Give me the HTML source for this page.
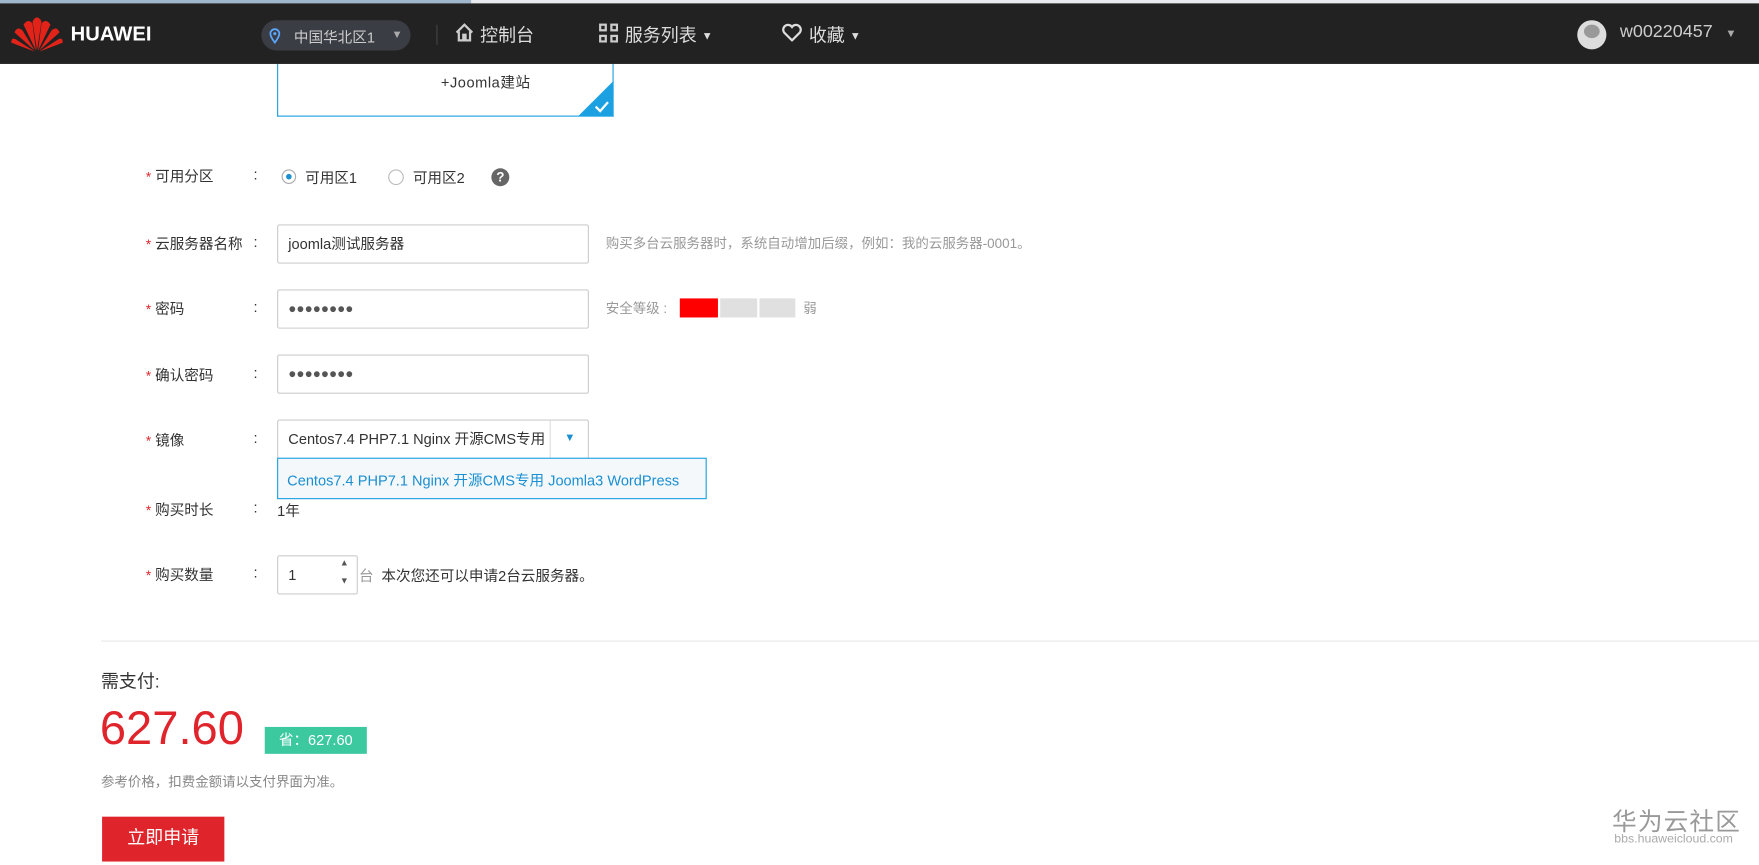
<!DOCTYPE html>
<html><head><meta charset="utf-8">
<style>
html,body{margin:0;padding:0;background:#fff;overflow:hidden}
body{width:1759px;height:865px;position:relative}
#s{position:absolute;left:0;top:0;width:1568px;height:771px;transform:scale(1.1218);transform-origin:0 0;font-family:"Liberation Sans","Noto Sans CJK SC",sans-serif;color:#333}
.a{position:absolute;white-space:nowrap}
.hd{position:absolute;left:0;top:3px;width:1568px;height:54px;background:#222}
.lab{font-size:13px;color:#333}
.star{color:#e0242b;font-size:12px}
.inp{position:absolute;left:247px;border:1px solid #ccc;border-radius:2px;background:#fff;font-size:13px;line-height:33px;padding-left:9px;box-sizing:border-box;width:278px;height:35px}
.dots{font-size:12px;letter-spacing:0px;color:#555}
.hint{font-size:12px;color:#999}
</style></head><body><div id="s">
<div class="a" style="left:0;top:0;width:1568px;height:3px;background:#e8ecf0"></div>
<div class="a" style="left:0;top:0;width:420px;height:3px;background:#9fb6cc"></div>
<div class="hd"></div>
<svg class="a" style="left:10px;top:13px" width="46" height="34" viewBox="0 0 46 34">
<g fill="#e2231a">
<path d="M23 32 L19 6 Q23 -1 27 6 Z"/>
<path d="M22 32 L11 9 Q15 3 19 8 Z" />
<path d="M24 32 L35 9 Q31 3 27 8 Z"/>
<path d="M21 32 L3 16 Q5 10 10 14 Z"/>
<path d="M25 32 L43 16 Q41 10 36 14 Z"/>
<path d="M21 33 L0 25 Q0 20 4 22 Z"/>
<path d="M25 33 L46 25 Q46 20 42 22 Z"/>
</g></svg>
<div class="a" style="left:63px;top:20px;font-size:18px;font-weight:bold;color:#fff">HUAWEI</div>
<div class="a" style="left:233px;top:18px;width:133px;height:27px;border-radius:14px;background:#3a3d44"></div>
<svg class="a" style="left:240px;top:25px" width="10" height="14" viewBox="0 0 10 14"><path d="M5 13 C2 9 1 7 1 5 A4 4 0 0 1 9 5 C9 7 8 9 5 13Z" fill="none" stroke="#5aa7ff" stroke-width="1.6"/><circle cx="5" cy="5" r="1.4" fill="#5aa7ff"/></svg>
<div class="a" style="left:262px;top:23px;font-size:13px;color:#ccc">中国华北区1</div>
<div class="a" style="left:349px;top:26px;font-size:10px;color:#aaa">▼</div>
<div class="a" style="left:389px;top:22px;width:1px;height:18px;background:#444"></div>
<svg class="a" style="left:405px;top:20px" width="18" height="18" viewBox="0 0 18 18"><path d="M2 9 L9 2 L16 9 M4 8 V16 H8 V11 H10 V16 H14 V8" fill="none" stroke="#ccc" stroke-width="2"/></svg>
<div class="a" style="left:428px;top:18px;font-size:16px;color:#ddd">控制台</div>
<svg class="a" style="left:534px;top:21px" width="17" height="17"><g fill="#ccc"><rect x="0" y="0" width="7" height="7"/><rect x="10" y="0" width="7" height="7"/><rect x="0" y="10" width="7" height="7"/><rect x="10" y="10" width="7" height="7"/></g><g fill="#222"><rect x="2" y="2" width="3" height="3"/><rect x="12" y="2" width="3" height="3"/><rect x="2" y="12" width="3" height="3"/><rect x="12" y="12" width="3" height="3"/></g></svg>
<div class="a" style="left:557px;top:18px;font-size:16px;color:#ddd">服务列表 <span style="font-size:10px;vertical-align:2px">▼</span></div>
<svg class="a" style="left:697px;top:21px" width="18" height="16" viewBox="0 0 18 16"><path d="M9 15 L2 8 A4 4 0 0 1 9 3 A4 4 0 0 1 16 8 Z" fill="none" stroke="#ddd" stroke-width="2"/></svg>
<div class="a" style="left:721px;top:18px;font-size:16px;color:#ddd">收藏 <span style="font-size:10px;vertical-align:2px">▼</span></div>
<div class="a" style="left:1406px;top:18px;width:26px;height:26px;border-radius:50%;background:#ddd"></div>
<div class="a" style="left:1412px;top:22px;width:14px;height:12px;border-radius:50%;background:#999"></div>
<div class="a" style="left:1444px;top:20px;font-size:16px;color:#ccc">w00220457</div>
<div class="a" style="left:1538px;top:25px;font-size:10px;color:#aaa">▼</div>

<div class="a" style="left:247px;top:57px;width:298px;height:46px;border:1px solid #1ba1e2;border-top:none"></div>
<div class="a" style="left:393px;top:63px;font-size:13px;color:#333;letter-spacing:0.5px">+Joomla建站</div>
<svg class="a" style="left:515px;top:72px" width="32" height="32"><path d="M32 0 V32 H0 Z" fill="#1ba1e2"/><path d="M16 23 L20 27 L27 19" stroke="#fff" stroke-width="2" fill="none"/></svg>

<div class="a lab" style="left:130px;top:147px"><span class="star">*</span> 可用分区</div><div class="a lab" style="left:226px;top:148px">:</div>
<div class="a lab" style="left:130px;top:207px"><span class="star">*</span> 云服务器名称</div><div class="a lab" style="left:226px;top:208px">:</div>
<div class="a lab" style="left:130px;top:265px"><span class="star">*</span> 密码</div><div class="a lab" style="left:226px;top:266px">:</div>
<div class="a lab" style="left:130px;top:324px"><span class="star">*</span> 确认密码</div><div class="a lab" style="left:226px;top:325px">:</div>
<div class="a lab" style="left:130px;top:382px"><span class="star">*</span> 镜像</div><div class="a lab" style="left:226px;top:383px">:</div>
<div class="a lab" style="left:130px;top:444px"><span class="star">*</span> 购买时长</div><div class="a lab" style="left:226px;top:445px">:</div>
<div class="a lab" style="left:130px;top:502px"><span class="star">*</span> 购买数量</div><div class="a lab" style="left:226px;top:503px">:</div>

<div class="a" style="left:251px;top:151px;width:13px;height:13px;border:1px solid #aaa;border-radius:50%;box-sizing:border-box"></div>
<div class="a" style="left:255px;top:155px;width:5px;height:5px;border-radius:50%;background:#1a8fd1"></div>
<div class="a lab" style="left:272px;top:148px">可用区1</div>
<div class="a" style="left:346px;top:151px;width:14px;height:14px;border:1px solid #bbb;border-radius:50%;box-sizing:border-box"></div>
<div class="a lab" style="left:368px;top:148px">可用区2</div>
<div class="a" style="left:438px;top:150px;width:16px;height:16px;border-radius:50%;background:#666;color:#fff;font-size:12px;font-weight:bold;text-align:center;line-height:16px">?</div>

<div class="inp" style="top:200px;color:#333">joomla测试服务器</div>
<div class="a hint" style="left:540px;top:208px">购买多台云服务器时，系统自动增加后缀，例如：我的云服务器-0001。</div>
<div class="inp dots" style="top:258px">●●●●●●●●</div>
<div class="a hint" style="left:540px;top:266px">安全等级 :</div>
<div class="a" style="left:606px;top:266px;width:34px;height:17px;background:#f00"></div>
<div class="a" style="left:642px;top:266px;width:33px;height:17px;background:#e0e0e0"></div>
<div class="a" style="left:677px;top:266px;width:32px;height:17px;background:#e0e0e0"></div>
<div class="a hint" style="left:716px;top:266px">弱</div>
<div class="inp dots" style="top:316px">●●●●●●●●</div>
<div class="inp" style="top:374px;overflow:hidden;padding-right:36px;color:#333">Centos7.4 PHP7.1 Nginx 开源CMS专用</div>
<div class="a" style="left:490px;top:375px;width:1px;height:33px;background:#ddd"></div>
<div class="a" style="left:503px;top:385px;font-size:10px;color:#1a8fd1">▼</div>
<div class="a" style="left:247px;top:408px;width:383px;height:37px;border:1px solid #1ba1e2;box-sizing:border-box;background:#f4f8fb"></div>
<div class="a" style="left:256px;top:418px;font-size:13px;color:#1a8fd1">Centos7.4 PHP7.1 Nginx 开源CMS专用 Joomla3 WordPress</div>
<div class="a lab" style="left:247px;top:445px">1年</div>
<div class="inp" style="top:495px;width:72px">1</div>
<div class="a" style="left:303px;top:497px;font-size:8px;color:#555">▲</div>
<div class="a" style="left:303px;top:513px;font-size:8px;color:#555">▼</div>
<div class="a hint" style="left:320px;top:503px;font-size:13px">台</div>
<div class="a lab" style="left:340px;top:503px">本次您还可以申请2台云服务器。</div>

<div class="a" style="left:90px;top:571px;width:1478px;height:1px;background:#e8e8e8"></div>
<div class="a" style="left:90px;top:594px;font-size:16px;color:#333">需支付:</div>
<div class="a" style="left:89px;top:625px;font-size:42px;color:#e0242b">627.60</div>
<div class="a" style="left:236px;top:648px;width:91px;height:24px;background:#3cc9a0;color:#fff;font-size:13px;line-height:24px;text-align:center">省：627.60</div>
<div class="a" style="left:90px;top:688px;font-size:12px;color:#888">参考价格，扣费金额请以支付界面为准。</div>
<div class="a" style="left:91px;top:728px;width:109px;height:40px;background:#e0242b;color:#fff;font-size:16px;line-height:40px;text-align:center">立即申请</div>
<div class="a" style="left:1437px;top:715px;font-size:22px;color:#999;letter-spacing:1px">华为云社区</div>
<div class="a" style="left:1439px;top:742px;font-size:11px;color:#aaa">bbs.huaweicloud.com</div>
</div></body></html>
